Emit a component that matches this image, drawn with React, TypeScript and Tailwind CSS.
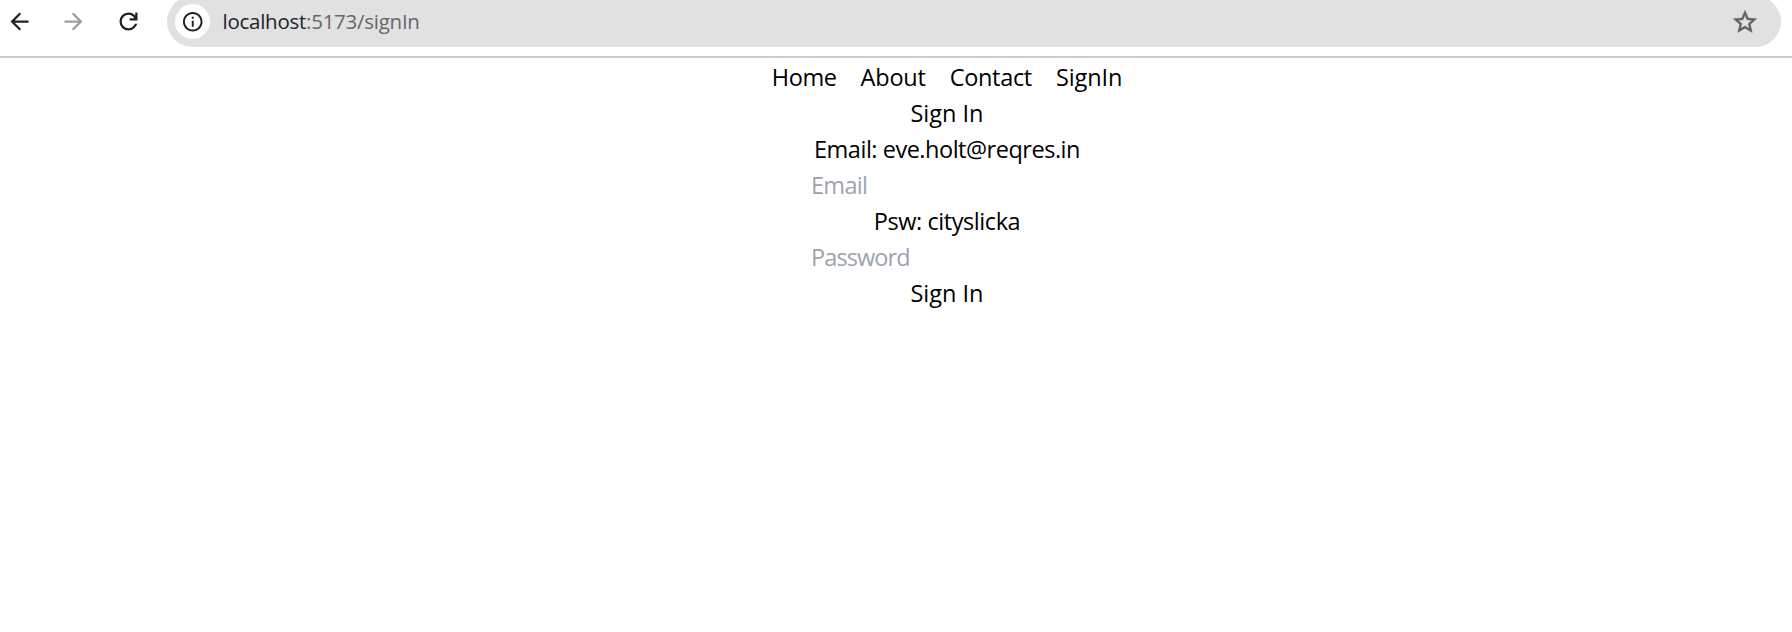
const navItems = [
  { label: 'Home', tracking: 'tracking-[-0.4px]' },
  { label: 'About', tracking: 'tracking-[-0.2px]' },
  { label: 'Contact', tracking: 'tracking-[-0.32px]' },
  { label: 'SignIn', tracking: 'tracking-[-0.1px]' },
];

function BrowserBar() {
  return (
    <header className="flex h-[58px] items-start border-b-2 border-[#cccccc] bg-white text-[#202124]">
      <div className="flex h-[43px] w-[167px] shrink-0 items-center">
        <button aria-label="Back" className="ml-[6px]">
          <svg className="block size-[27px]" viewBox="0 0 24 24" fill="currentColor">
            <path d="M20 11H7.83l5.59-5.59L12 4l-8 8 8 8 1.41-1.41L7.83 13H20v-2z" />
          </svg>
        </button>
        <button aria-label="Forward" className="ml-[27px] text-[#9d9d9e]">
          <svg className="block size-[27px]" viewBox="0 0 24 24" fill="currentColor">
            <path d="M12 4l-1.41 1.41L16.17 11H4v2h12.17l-5.58 5.59L12 20l8-8z" />
          </svg>
        </button>
        <button aria-label="Reload" className="ml-[28px]">
          <svg className="block size-[27px]" viewBox="0 0 24 24" fill="currentColor">
            <path d="M12 20q-3.35 0-5.675-2.325T4 12t2.325-5.675T12 4q1.725 0 3.3.713T18 6.75V4h2v7h-7V9h4.2q-.8-1.4-2.187-2.2T12 6Q9.5 6 7.75 7.75T6 12t1.75 4.25T12 18q1.925 0 3.475-1.1T17.65 14h2.1q-.7 2.65-2.85 4.325T12 20Z" />
          </svg>
        </button>
      </div>
      <div className="-mt-1 flex h-[51px] w-[1614px] shrink-0 items-center rounded-full bg-[#e1e1e1]">
        <span className="ml-2 flex size-[35px] items-center justify-center rounded-full bg-white">
          <svg className="block size-[23.5px]" viewBox="0 0 24 24" fill="currentColor">
            <path d="M11 7h2v2h-2zm0 4h2v6h-2zm1-9C6.48 2 2 6.48 2 12s4.48 10 10 10 10-4.48 10-10S17.52 2 12 2zm0 18c-4.41 0-8-3.59-8-8s3.59-8 8-8 8 3.59 8 8-3.59 8-8 8z" />
          </svg>
        </span>
        <span className="ml-[12.5px] pb-[2px] text-[20.5px] leading-[28px] tracking-[-0.26px]">
          localhost<span className="text-[#666769]">:5173/signIn</span>
        </span>
        <button aria-label="Bookmark" className="mr-[22px] ml-auto text-[#5f6062]">
          <svg className="block size-[28px]" viewBox="0 0 24 24" fill="currentColor" stroke="currentColor" strokeWidth="0.4">
            <path d="M22 9.24l-7.19-.62L12 2 9.19 8.63 2 9.24l5.46 4.73L5.82 21 12 17.27 18.18 21l-1.63-7.03L22 9.24zM12 15.4l-3.76 2.27 1-4.28-3.32-2.88 4.38-.38L12 6.1l1.71 4.04 4.38.38-3.32 2.88 1 4.28L12 15.4z" />
          </svg>
        </button>
      </div>
    </header>
  );
}

const inputClass =
  'block h-9 w-[272px] bg-transparent p-0 outline-none placeholder:text-[#9ca3af]';

export default function App() {
  return (
    <div className="h-[632px] w-full overflow-hidden bg-white font-['Open_Sans','Noto_Sans',sans-serif]">
      <BrowserBar />
      <main className="flex flex-col items-center pt-px pl-[102px] text-[23.5px] leading-[36px] text-black">
        <nav className="flex gap-6">
          {navItems.map((item) => (
            <a key={item.label} className={item.tracking}>
              {item.label}
            </a>
          ))}
        </nav>
        <h1>Sign In</h1>
        <p className="tracking-[-0.48px]">Email: eve.holt@reqres.in</p>
        <input className={inputClass + ' tracking-[-0.7px]'} placeholder="Email" />
        <p className="tracking-[-0.43px]">Psw: cityslicka</p>
        <input className={inputClass + ' tracking-[-0.9px]'} placeholder="Password" />
        <button>Sign In</button>
      </main>
    </div>
  );
}
